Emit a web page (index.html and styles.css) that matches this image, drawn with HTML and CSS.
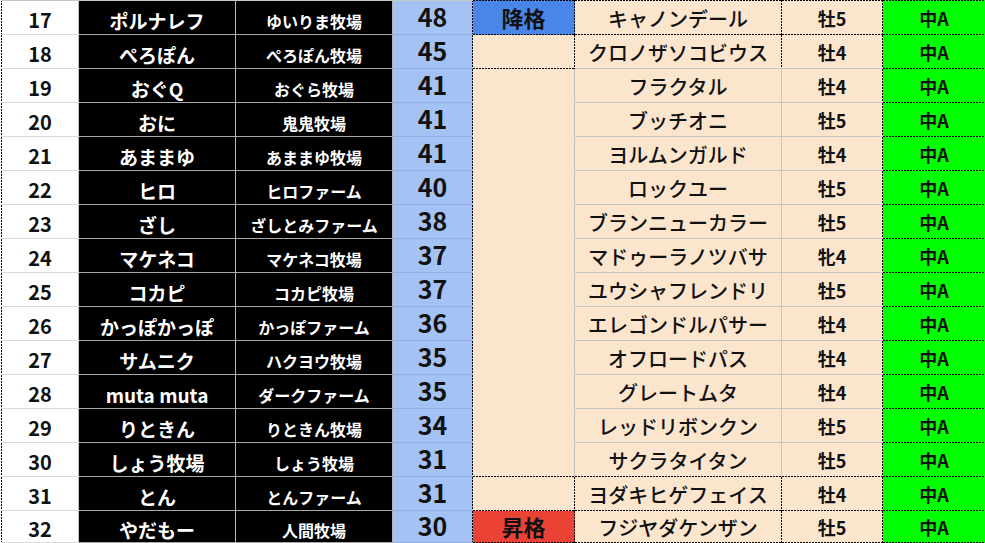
FILE: index.html
```html
<!DOCTYPE html>
<html lang="ja">
<head>
<meta charset="utf-8">
<link rel="stylesheet" href="styles.css">
</head>
<body>
<div class="sheet">
  <div class="row first"><div class="c num">17</div><div class="c name">ポルナレフ</div><div class="c farm">ゆいりま牧場</div><div class="c score">48</div><div class="c tag down dt db dr">降格</div><div class="c horse dt db dr">キャノンデール</div><div class="c sex dt db">牡5</div><div class="c grade dt">中A</div></div>
  <div class="row"><div class="c num">18</div><div class="c name">ぺろぽん</div><div class="c farm">ぺろぽん牧場</div><div class="c score">45</div><div class="c tag db dr"></div><div class="c horse dr">クロノザソコビウス</div><div class="c sex">牡4</div><div class="c grade">中A</div></div>
  <div class="row"><div class="c num">19</div><div class="c name">おぐQ</div><div class="c farm">おぐら牧場</div><div class="c score">41</div><div class="c tag"></div><div class="c horse">フラクタル</div><div class="c sex">牡4</div><div class="c grade">中A</div></div>
  <div class="row"><div class="c num">20</div><div class="c name">おに</div><div class="c farm">鬼鬼牧場</div><div class="c score">41</div><div class="c tag"></div><div class="c horse">ブッチオニ</div><div class="c sex">牡5</div><div class="c grade">中A</div></div>
  <div class="row"><div class="c num">21</div><div class="c name">あままゆ</div><div class="c farm">あままゆ牧場</div><div class="c score">41</div><div class="c tag"></div><div class="c horse">ヨルムンガルド</div><div class="c sex">牡4</div><div class="c grade">中A</div></div>
  <div class="row"><div class="c num">22</div><div class="c name">ヒロ</div><div class="c farm">ヒロファーム</div><div class="c score">40</div><div class="c tag"></div><div class="c horse">ロックユー</div><div class="c sex">牡5</div><div class="c grade">中A</div></div>
  <div class="row"><div class="c num">23</div><div class="c name">ざし</div><div class="c farm">ざしとみファーム</div><div class="c score">38</div><div class="c tag"></div><div class="c horse">ブランニューカラー</div><div class="c sex">牡5</div><div class="c grade">中A</div></div>
  <div class="row"><div class="c num">24</div><div class="c name">マケネコ</div><div class="c farm">マケネコ牧場</div><div class="c score">37</div><div class="c tag"></div><div class="c horse">マドゥーラノツバサ</div><div class="c sex">牝4</div><div class="c grade">中A</div></div>
  <div class="row"><div class="c num">25</div><div class="c name">コカピ</div><div class="c farm">コカピ牧場</div><div class="c score">37</div><div class="c tag"></div><div class="c horse">ユウシャフレンドリ</div><div class="c sex">牡5</div><div class="c grade">中A</div></div>
  <div class="row"><div class="c num">26</div><div class="c name">かっぽかっぽ</div><div class="c farm">かっぽファーム</div><div class="c score">36</div><div class="c tag"></div><div class="c horse">エレゴンドルパサー</div><div class="c sex">牡4</div><div class="c grade">中A</div></div>
  <div class="row"><div class="c num">27</div><div class="c name">サムニク</div><div class="c farm">ハクヨウ牧場</div><div class="c score">35</div><div class="c tag"></div><div class="c horse">オフロードパス</div><div class="c sex">牡4</div><div class="c grade">中A</div></div>
  <div class="row"><div class="c num">28</div><div class="c name">muta muta</div><div class="c farm">ダークファーム</div><div class="c score">35</div><div class="c tag"></div><div class="c horse">グレートムタ</div><div class="c sex">牡4</div><div class="c grade">中A</div></div>
  <div class="row"><div class="c num">29</div><div class="c name">りときん</div><div class="c farm">りときん牧場</div><div class="c score">34</div><div class="c tag"></div><div class="c horse">レッドリボンクン</div><div class="c sex">牡5</div><div class="c grade">中A</div></div>
  <div class="row"><div class="c num">30</div><div class="c name">しょう牧場</div><div class="c farm">しょう牧場</div><div class="c score">31</div><div class="c tag db"></div><div class="c horse db">サクラタイタン</div><div class="c sex db">牡5</div><div class="c grade">中A</div></div>
  <div class="row"><div class="c num">31</div><div class="c name">とん</div><div class="c farm">とんファーム</div><div class="c score">31</div><div class="c tag db dr"></div><div class="c horse db dr">ヨダキヒゲフェイス</div><div class="c sex db">牡4</div><div class="c grade">中A</div></div>
  <div class="row last"><div class="c num">32</div><div class="c name">やだもー</div><div class="c farm">人間牧場</div><div class="c score">30</div><div class="c tag up db dr">昇格</div><div class="c horse db dr">フジヤダケンザン</div><div class="c sex db">牡5</div><div class="c grade">中A</div></div>
</div>
</body>
</html>
```

FILE: styles.css
```css
html, body {
  margin: 0;
  padding: 0;
  background: #ffffff;
}

body {
  padding-left: 1px;
  font-family: "Noto Sans CJK JP", "Noto Sans", sans-serif;
  font-weight: 700;
}

.sheet {
  display: flex;
  flex-direction: column;
}

.row {
  display: grid;
  grid-template-columns: 78px 157px 157px 80px 102px 207px 101px 103px;
  height: 34px;
}

.row.first {
  height: 35px;
}

.row.last {
  height: 32px;
}

.c {
  --t: none;
  --r: none;
  --b: none;
  --l: none;
  box-sizing: border-box;
  display: flex;
  align-items: center;
  justify-content: center;
  border-right: 1px solid #c6c6c6;
  border-bottom: 1px solid #c6c6c6;
  white-space: nowrap;
  line-height: 1;
  padding-top: 3px;
  background-image: var(--t), var(--r), var(--b), var(--l);
  background-origin: border-box;
  background-clip: border-box;
  background-position: left top, right top, left bottom, left top;
  background-size: 3px 1px, 1px 3px, 3px 1px, 1px 3px;
  background-repeat: repeat-x, repeat-y, repeat-x, repeat-y;
}

.first .c {
  border-top: 1px solid #c6c6c6;
}

.dt {
  --t: linear-gradient(to right, #000 2px, transparent 2px);
  border-top-color: transparent !important;
}

.dr {
  --r: linear-gradient(to bottom, #000 2px, transparent 2px);
  border-right-color: transparent !important;
}

.db {
  --b: linear-gradient(to right, #000 2px, transparent 2px);
  border-bottom-color: transparent !important;
}

.num {
  --l: linear-gradient(to bottom, #000 2px, transparent 2px);
  border-left: 1px solid transparent;
  background-color: #ffffff;
  color: #111;
  font-size: 20px;
  border-bottom-color: #d9d9d9;
  border-right-color: #c0c0c0;
  padding-top: 5px;
}

.name, .farm {
  background-color: #000000;
  color: #ffffff;
  border-right-color: #b4b4b4;
  border-bottom-color: #a8a8a8;
}

.name {
  font-size: 19px;
  padding-top: 5px;
}

.farm {
  font-size: 16px;
  padding-top: 6px;
}

.score {
  --r: linear-gradient(to bottom, #000 2px, transparent 2px);
  background-color: #a4c2f4;
  color: #111;
  font-size: 25px;
  border-right-color: transparent;
  border-bottom-color: #93afe0;
  padding-top: 0;
  padding-bottom: 2px;
}

.tag {
  background-color: #fce5cd;
  color: #111;
  font-size: 22px;
  border-right-color: #c0c0c0;
  border-bottom-color: #fce5cd;
  padding-top: 0;
  padding-bottom: 2px;
}

.tag.down {
  background-color: #4a86e8;
}

.tag.up {
  background-color: #ea4335;
}

.horse {
  background-color: #fce5cd;
  color: #111;
  font-size: 20px;
  font-weight: 500;
  padding-top: 3px;
}

.sex {
  --r: linear-gradient(to bottom, #000 2px, transparent 2px);
  background-color: #fce5cd;
  color: #111;
  font-size: 18px;
  border-right-color: transparent;
  padding-top: 1px;
}

.grade {
  --r: linear-gradient(to bottom, #000 2px, transparent 2px);
  --b: linear-gradient(to right, #000 2px, transparent 2px);
  background-color: #00ff00;
  color: #111;
  font-size: 18px;
  border-right-color: transparent;
  border-bottom-color: transparent;
  padding-top: 1px;
}
```
